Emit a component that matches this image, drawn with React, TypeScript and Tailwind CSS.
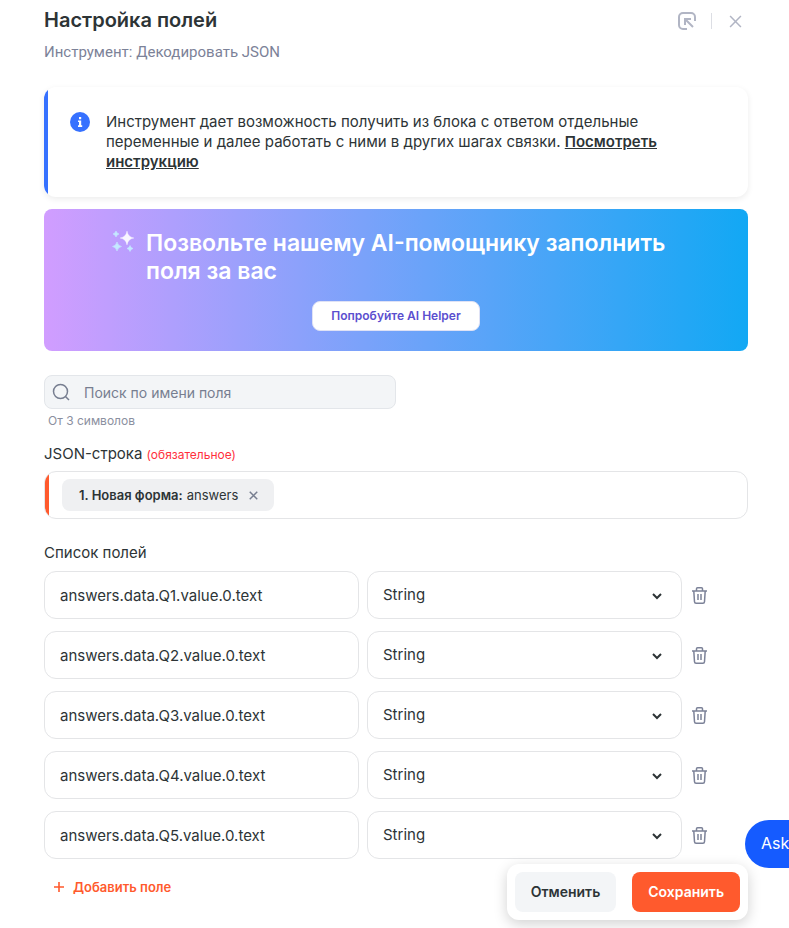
import { useState } from "react";

const initialFields = [1, 2, 3, 4, 5].map((n) => `answers.data.Q${n}.value.0.text`);

function OpenIcon() {
  return (
    <svg width="18" height="18" viewBox="0 0 18 18" fill="none" stroke="currentColor" strokeWidth="2">
      <path d="M17 9V5a4 4 0 0 0-4-4H5a4 4 0 0 0-4 4v8a4 4 0 0 0 4 4h4" />
      <path d="M7 13V7h6M7 7l8 8" />
    </svg>
  );
}

function CrossIcon({ size, width }: { size: number; width: number }) {
  return (
    <svg width={size} height={size} viewBox="0 0 12 12" fill="none" stroke="currentColor" strokeWidth={width}>
      <path d="M1 1l10 10M11 1L1 11" />
    </svg>
  );
}

function InfoIcon() {
  return (
    <svg className="shrink-0" width="20" height="20" viewBox="0 0 20 20">
      <circle cx="10" cy="10" r="10" fill="#3671ff" />
      <path fill="#fff" d="M9 5h2.200v2.200H9zM8 8.400h3.200v4.800h1V15H8v-1.800h1V10H8z" />
    </svg>
  );
}

function SparklesIcon() {
  return (
    <svg className="shrink-0" width="24" height="24" viewBox="0 0 24 24">
      <path fill="#fff" fillOpacity="0.9" stroke="#fff" strokeOpacity="0.6" strokeWidth="0.500" d="M16 2Q16.900 7.900 23 9Q16.900 10.100 16 16Q15.100 10.100 9 9Q15.100 7.900 16 2Z" />
      <path fill="#c4e9ff" stroke="#c4e9ff" strokeWidth="0.600" d="M5 2Q5.600 4.400 8 5Q5.600 5.600 5 8Q4.400 5.600 2 5Q4.400 4.400 5 2Z" />
      <path fill="#c4e9ff" stroke="#c4e9ff" strokeWidth="0.600" d="M6 13Q6.800 16.700 10.500 17.500Q6.800 18.300 6 22Q5.200 18.300 1.500 17.500Q5.200 16.700 6 13Z" />
      <path fill="#c4e9ff" stroke="#c4e9ff" strokeWidth="0.600" d="M19 16.500Q19.600 18.900 22 19.500Q19.600 20.100 19 22.500Q18.400 20.100 16 19.500Q18.400 18.900 19 16.500Z" />
    </svg>
  );
}

function SearchIcon() {
  return (
    <svg width="18" height="18" viewBox="0 0 18 18" fill="none" stroke="currentColor" strokeWidth="1.500">
      <circle cx="8.500" cy="8.500" r="7" />
      <path d="M13.500 13.500L17 17" />
    </svg>
  );
}

function TrashIcon() {
  return (
    <svg width="15" height="17" viewBox="0 0 15 17" fill="none" stroke="currentColor" strokeWidth="1.500">
      <path d="M0 4h15M4.500 4V1.800a1 1 0 0 1 1-1h4a1 1 0 0 1 1 1V4M1.800 4l.7 10.700a1.600 1.600 0 0 0 1.600 1.500h6.800a1.600 1.600 0 0 0 1.600-1.500L13.200 4M6 7v6M9 7v6" />
    </svg>
  );
}

export default function App() {
  const [fields, setFields] = useState(initialFields);

  return (
    <main className="bg-white pt-2 pr-[41px] pb-7 pl-11 font-[Inter,'Noto_Sans',sans-serif] text-[15px] leading-5 text-[#2d3436]">
      <header className="flex items-start justify-between">
        <div>
          <h1 className="text-xl leading-6 font-semibold">Настройка полей</h1>
          <p className="mt-2.5 font-[Roboto,sans-serif] text-[#7c8298]">Инструмент: Декодировать JSON</p>
        </div>
        <div className="mt-1 flex items-center pr-1.5 text-[#b1b5c4]">
          <button type="button" aria-label="Свернуть"><OpenIcon /></button>
          <span className="mr-[17px] ml-[15px] h-4 w-px bg-[#dcdee4]" />
          <button type="button" aria-label="Закрыть"><CrossIcon size={13} width={1.4} /></button>
        </div>
      </header>

      <section className="mt-[25px] flex overflow-hidden rounded-xl shadow-[0_2px_6px_rgba(0,0,0,0.08)]">
        <span className="w-1 shrink-0 bg-[#3671ff]" />
        <div className="flex gap-4 py-[25px] pr-14 pl-[22px]">
          <InfoIcon />
          <p>
            Инструмент дает возможность получить из блока с ответом отдельные переменные и далее работать с ними в других шагах связки.{" "}
            <a href="#guide" className="font-semibold underline">Посмотреть инструкцию</a>
          </p>
        </div>
      </section>

      <section className="mt-3 flex flex-col items-center rounded-lg bg-[linear-gradient(90deg,#d19dff,#12a8f4)] py-5 pr-14 pl-[67px]">
        <div className="flex w-full gap-[11px]">
          <SparklesIcon />
          <h2 className="text-[23px] leading-7 font-semibold text-white">Позвольте нашему AI-помощнику заполнить поля за вас</h2>
        </div>
        <button type="button" className="mt-4 mr-[11px] h-[30px] rounded-lg border border-[#dfe2f5] bg-white px-[18px] text-xs font-semibold text-[#5b4fcf]">
          Попробуйте AI Helper
        </button>
      </section>

      <div className="mt-6 flex h-[34px] w-1/2 items-center gap-[14px] rounded-lg border border-[#e3e6ea] bg-[#f3f5f7] px-[7px] text-[#777e90]">
        <SearchIcon />
        <input type="search" aria-label="Поиск по имени поля" placeholder="Поиск по имени поля" className="min-w-0 flex-1 bg-transparent pt-0.5 text-sm outline-none placeholder:text-[#777e90]" />
      </div>
      <p className="mt-1 pl-1 text-xs leading-4 text-[#8b90a0]">От 3 символов</p>

      <div className="mt-[15px]">
        JSON-строка <span className="text-xs text-[#ff2f3c]">(обязательное)</span>
      </div>
      <div className="mt-[7px] flex h-12 overflow-hidden rounded-xl border border-[#e4e5e7]">
        <span className="w-1 bg-[#ff5a2d]" />
        <div className="my-[7px] ml-[13px] flex items-center rounded-lg bg-[#eff0f2] pr-4 pl-[17px] text-[13px]">
          <span className="font-semibold">1. Новая форма:</span>
          <span className="ml-1">answers</span>
          <button type="button" aria-label="Удалить переменную" className="ml-[11px] text-[#777e90]"><CrossIcon size={9} width={2} /></button>
        </div>
      </div>

      <h3 className="mt-6">Список полей</h3>
      <div className="mt-2 flex flex-col gap-3">
        {fields.map((field, index) => (
          <div key={index} className="grid grid-cols-[1fr_1fr_58px] items-center gap-2">
            <input
              aria-label={`Поле ${index + 1}`}
              value={field}
              onChange={(e) => setFields(fields.map((f, i) => (i === index ? e.target.value : f)))}
              className="h-12 min-w-0 rounded-xl border border-[#e4e5e7] px-[15px] outline-none"
            />
            <div className="relative">
              <select aria-label={`Тип поля ${index + 1}`} className="h-12 w-full appearance-none rounded-xl border border-[#e4e5e7] bg-white px-[15px]">
                <option>String</option>
              </select>
              <svg className="pointer-events-none absolute top-[21px] right-5" width="10" height="8" viewBox="0 0 10 8" fill="none" stroke="currentColor" strokeWidth="2">
                <path d="M1 2l4 4 4-4" />
              </svg>
            </div>
            <button type="button" aria-label={`Удалить поле ${index + 1}`} className="ml-0.5 justify-self-start text-[#7c8298]" onClick={() => setFields(fields.filter((_, i) => i !== index))}>
              <TrashIcon />
            </button>
          </div>
        ))}
      </div>

      <button type="button" className="mt-[18px] ml-2.5 flex items-center gap-[9px] text-[13px] font-semibold text-[#ff5a2d]" onClick={() => setFields([...fields, ""])}>
        <svg width="10" height="10" viewBox="0 0 10 10" stroke="currentColor" strokeWidth="1.600">
          <path d="M5 0v10M0 5h10" />
        </svg>
        Добавить поле
      </button>

      <div className="fixed right-[41px] bottom-2 flex gap-4 rounded-xl bg-white p-2 text-sm font-semibold shadow-[0_4px_14px_rgba(0,0,0,0.18)]">
        <button type="button" className="h-10 rounded-lg bg-[#f3f5f7] px-4">Отменить</button>
        <button type="button" className="h-10 rounded-lg bg-[#ff5a2d] px-4 text-white">Сохранить</button>
      </div>

      <button type="button" className="fixed right-0 bottom-[60px] h-12 w-11 overflow-hidden rounded-l-full bg-[#155bff] pb-0.5 pl-4 text-left text-base text-white">
        Ask
      </button>
    </main>
  );
}
